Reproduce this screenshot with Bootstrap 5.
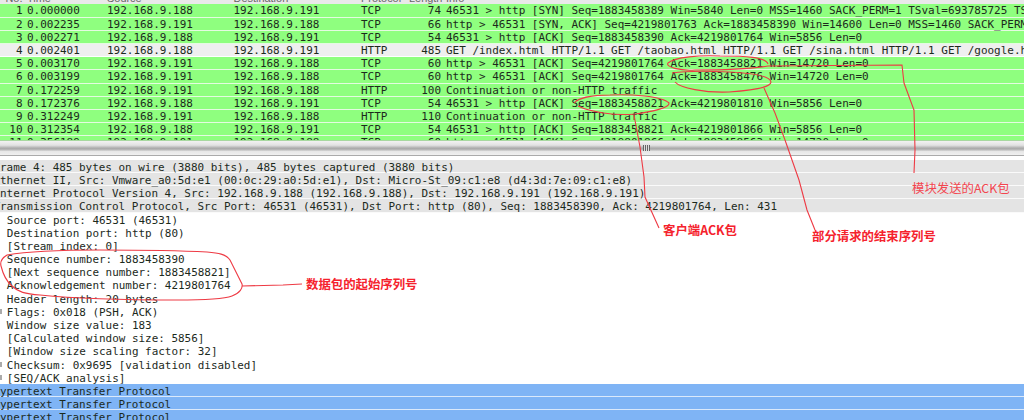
<!DOCTYPE html>
<html lang="zh">
<head>
<meta charset="utf-8">
<title>Wireshark capture</title>
<link href="https://cdn.jsdelivr.net/npm/bootstrap@5.3.0/dist/css/bootstrap.min.css" rel="stylesheet">
<style>
html,body{margin:0;background:#fff;overflow:hidden}
.shot{position:relative;width:1024px;height:420px;overflow:hidden;font-family:"DejaVu Sans Mono","Liberation Mono",monospace;font-size:10.95px;color:#1c2a1c;white-space:nowrap}
.headbar{height:4.4px;background:#e9e9e9;overflow:hidden;color:#666;font-family:"Liberation Sans",sans-serif;flex:none}
.headbar .cells{margin-top:-8px;height:13px;line-height:13px}
.packets{height:136.6px;overflow:hidden;flex:none;border-bottom:1px solid #a8d8a0;font-size:10.97px}
.pkt{height:13.2px;line-height:14.8px;background:linear-gradient(#e4fbe0,#e4fbe0) bottom/100% 1px no-repeat,#8fff7f}
.pkt.sel{background:linear-gradient(#fff,#fff) bottom/100% 1px no-repeat,#efefef}
.c-no{width:22.5px;text-align:right;flex:none}
.c-time{width:80px;margin-left:4.5px;flex:none}
.c-src{width:126.5px;flex:none}
.c-dst{width:127.5px;flex:none}
.c-proto{width:48px;flex:none}
.c-len{width:32px;text-align:right;flex:none}
.c-info{margin-left:5px;flex:none}
.splitter{height:14.6px;flex:none;background:linear-gradient(#f2f2f2 0,#e2e2e2 30%,#a9a9a9 52%,#bdbdbd 65%,#e6e6e6 72%,#f0f0f0 100%);border-bottom:1px solid #aaa}
.grip{width:7px;height:6px;margin-top:4px;margin-left:643px;background:repeating-linear-gradient(90deg,#666 0 1px,#ddd 1px 2px)}
.details{flex:1 1 auto;overflow:hidden;padding-top:4.2px}
.dl{height:13.2px;line-height:15.2px}
.dl.top{background:linear-gradient(#fafafa,#fafafa) bottom/100% 1px no-repeat,#e4e4e4;text-indent:-6.6px}
.dl.sub{padding-left:6.8px}
.dl.more{background:linear-gradient(#aaa,#aaa) 0 50%/2px 5px no-repeat}
.dl.hi{background:linear-gradient(#dbe9fb,#dbe9fb) bottom/100% 1px no-repeat,#7fb4f5;text-indent:-6.6px}
.overlay{position:absolute;left:0;top:0;pointer-events:none}
.note{position:absolute;color:#f5222d;font-family:"Noto Sans CJK SC","Liberation Sans",sans-serif;font-size:12.4px;line-height:16px}
.note.strong{font-weight:700}
.note.soft{color:#f3454f;font-weight:400}
.n1{left:912px;top:180px}
.n2{left:663px;top:222px}
.n3{left:812px;top:228px}
.n4{left:306px;top:276px}
</style>
</head>
<body>
<div class="shot d-flex flex-column">
  <div class="headbar"><div class="cells d-flex"><span class="c-no">No.</span><span class="c-time">Time</span><span class="c-src">Source</span><span class="c-dst">Destination</span><span class="c-proto">Protocol</span><span class="c-len">Length</span><span class="c-info">Info</span></div></div>
  <div class="packets">
    <div class="pkt d-flex"><span class="c-no">1</span><span class="c-time">0.000000</span><span class="c-src">192.168.9.188</span><span class="c-dst">192.168.9.191</span><span class="c-proto">TCP</span><span class="c-len">74</span><span class="c-info">46531 &gt; http [SYN] Seq=1883458389 Win=5840 Len=0 MSS=1460 SACK_PERM=1 TSval=693785725 TSecr=0</span></div>
    <div class="pkt d-flex"><span class="c-no">2</span><span class="c-time">0.002235</span><span class="c-src">192.168.9.191</span><span class="c-dst">192.168.9.188</span><span class="c-proto">TCP</span><span class="c-len">66</span><span class="c-info">http &gt; 46531 [SYN, ACK] Seq=4219801763 Ack=1883458390 Win=14600 Len=0 MSS=1460 SACK_PERM=1</span></div>
    <div class="pkt d-flex"><span class="c-no">3</span><span class="c-time">0.002271</span><span class="c-src">192.168.9.188</span><span class="c-dst">192.168.9.191</span><span class="c-proto">TCP</span><span class="c-len">54</span><span class="c-info">46531 &gt; http [ACK] Seq=1883458390 Ack=4219801764 Win=5856 Len=0</span></div>
    <div class="pkt sel d-flex"><span class="c-no">4</span><span class="c-time">0.002401</span><span class="c-src">192.168.9.188</span><span class="c-dst">192.168.9.191</span><span class="c-proto">HTTP</span><span class="c-len">485</span><span class="c-info">GET /index.html HTTP/1.1 GET /taobao.html HTTP/1.1 GET /sina.html HTTP/1.1 GET /google.html</span></div>
    <div class="pkt d-flex"><span class="c-no">5</span><span class="c-time">0.003170</span><span class="c-src">192.168.9.191</span><span class="c-dst">192.168.9.188</span><span class="c-proto">TCP</span><span class="c-len">60</span><span class="c-info">http &gt; 46531 [ACK] Seq=4219801764 Ack=1883458821 Win=14720 Len=0</span></div>
    <div class="pkt d-flex"><span class="c-no">6</span><span class="c-time">0.003199</span><span class="c-src">192.168.9.191</span><span class="c-dst">192.168.9.188</span><span class="c-proto">TCP</span><span class="c-len">60</span><span class="c-info">http &gt; 46531 [ACK] Seq=4219801764 Ack=1883458476 Win=14720 Len=0</span></div>
    <div class="pkt d-flex"><span class="c-no">7</span><span class="c-time">0.172259</span><span class="c-src">192.168.9.191</span><span class="c-dst">192.168.9.188</span><span class="c-proto">HTTP</span><span class="c-len">100</span><span class="c-info">Continuation or non-HTTP traffic</span></div>
    <div class="pkt d-flex"><span class="c-no">8</span><span class="c-time">0.172376</span><span class="c-src">192.168.9.188</span><span class="c-dst">192.168.9.191</span><span class="c-proto">TCP</span><span class="c-len">54</span><span class="c-info">46531 &gt; http [ACK] Seq=1883458821 Ack=4219801810 Win=5856 Len=0</span></div>
    <div class="pkt d-flex"><span class="c-no">9</span><span class="c-time">0.312249</span><span class="c-src">192.168.9.191</span><span class="c-dst">192.168.9.188</span><span class="c-proto">HTTP</span><span class="c-len">110</span><span class="c-info">Continuation or non-HTTP traffic</span></div>
    <div class="pkt d-flex"><span class="c-no">10</span><span class="c-time">0.312354</span><span class="c-src">192.168.9.188</span><span class="c-dst">192.168.9.191</span><span class="c-proto">TCP</span><span class="c-len">54</span><span class="c-info">46531 &gt; http [ACK] Seq=1883458821 Ack=4219801866 Win=5856 Len=0</span></div>
    <div class="pkt d-flex"><span class="c-no">11</span><span class="c-time">0.356189</span><span class="c-src">192.168.9.191</span><span class="c-dst">192.168.9.188</span><span class="c-proto">TCP</span><span class="c-len">60</span><span class="c-info">http &gt; 46531 [ACK] Seq=4219801866 Ack=1883458563 Win=14720 Len=0</span></div>
  </div>
  <div class="splitter"><div class="grip"></div></div>
  <div class="details">
    <div class="dl top">Frame 4: 485 bytes on wire (3880 bits), 485 bytes captured (3880 bits)</div>
    <div class="dl top">Ethernet II, Src: Vmware_a0:5d:e1 (00:0c:29:a0:5d:e1), Dst: Micro-St_09:c1:e8 (d4:3d:7e:09:c1:e8)</div>
    <div class="dl top">Internet Protocol Version 4, Src: 192.168.9.188 (192.168.9.188), Dst: 192.168.9.191 (192.168.9.191)</div>
    <div class="dl top">Transmission Control Protocol, Src Port: 46531 (46531), Dst Port: http (80), Seq: 1883458390, Ack: 4219801764, Len: 431</div>
    <div class="dl sub">Source port: 46531 (46531)</div>
    <div class="dl sub">Destination port: http (80)</div>
    <div class="dl sub">[Stream index: 0]</div>
    <div class="dl sub">Sequence number: 1883458390</div>
    <div class="dl sub">[Next sequence number: 1883458821]</div>
    <div class="dl sub">Acknowledgement number: 4219801764</div>
    <div class="dl sub">Header length: 20 bytes</div>
    <div class="dl sub more">Flags: 0x018 (PSH, ACK)</div>
    <div class="dl sub">Window size value: 183</div>
    <div class="dl sub">[Calculated window size: 5856]</div>
    <div class="dl sub">[Window size scaling factor: 32]</div>
    <div class="dl sub more">Checksum: 0x9695 [validation disabled]</div>
    <div class="dl sub more">[SEQ/ACK analysis]</div>
    <div class="dl hi">Hypertext Transfer Protocol</div>
    <div class="dl hi">Hypertext Transfer Protocol</div>
    <div class="dl hi">Hypertext Transfer Protocol</div>
  </div>
  <svg class="overlay" width="1024" height="420" viewBox="0 0 1024 420" fill="none" stroke="#ee3a44" stroke-width="1.1">
    <path d="M768 64C766 57 745 56 720 56C700 55 675 57 668 63C665 67 680 71 695 70C720 70 750 69 768 66L902 65L904 83L914 110L915 150L914 173"/>
    <path d="M672 73C685 71 710 71 729 72C750 73 770 76 771 82C771 88 745 91 729 92C705 93 680 88 675 82"/>
    <path d="M574 103C578 98 592 95 610 95C630 94 662 96 669 103C670 108 650 112 635 114C615 116 590 112 578 106"/>
    <path d="M634 115L640 147L644 177L645 197L659 228"/>
    <path d="M764 88L775 113L785 140L799 180L807 210L815 230"/>
    <path d="M7 255C2 258 0 262 1 266C3 274 6 281 12 286C18 292 25 294 40 295C70 298 130 300 177 300C200 300 224 299 232 296C240 293 243 288 242 284C238 276 234 268 230 260C226 254 218 253 207 252C170 250 130 250 100 250C70 250 30 251 7 255"/>
    <path d="M242 286L283 285L302 284"/>
  </svg>
  <div class="note soft n1">模块发送的ACK包</div>
  <div class="note strong n2">客户端ACK包</div>
  <div class="note strong n3">部分请求的结束序列号</div>
  <div class="note strong n4">数据包的起始序列号</div>
</div>
<script src="https://cdn.jsdelivr.net/npm/bootstrap@5.3.0/dist/js/bootstrap.bundle.min.js"></script>
</body>
</html>
